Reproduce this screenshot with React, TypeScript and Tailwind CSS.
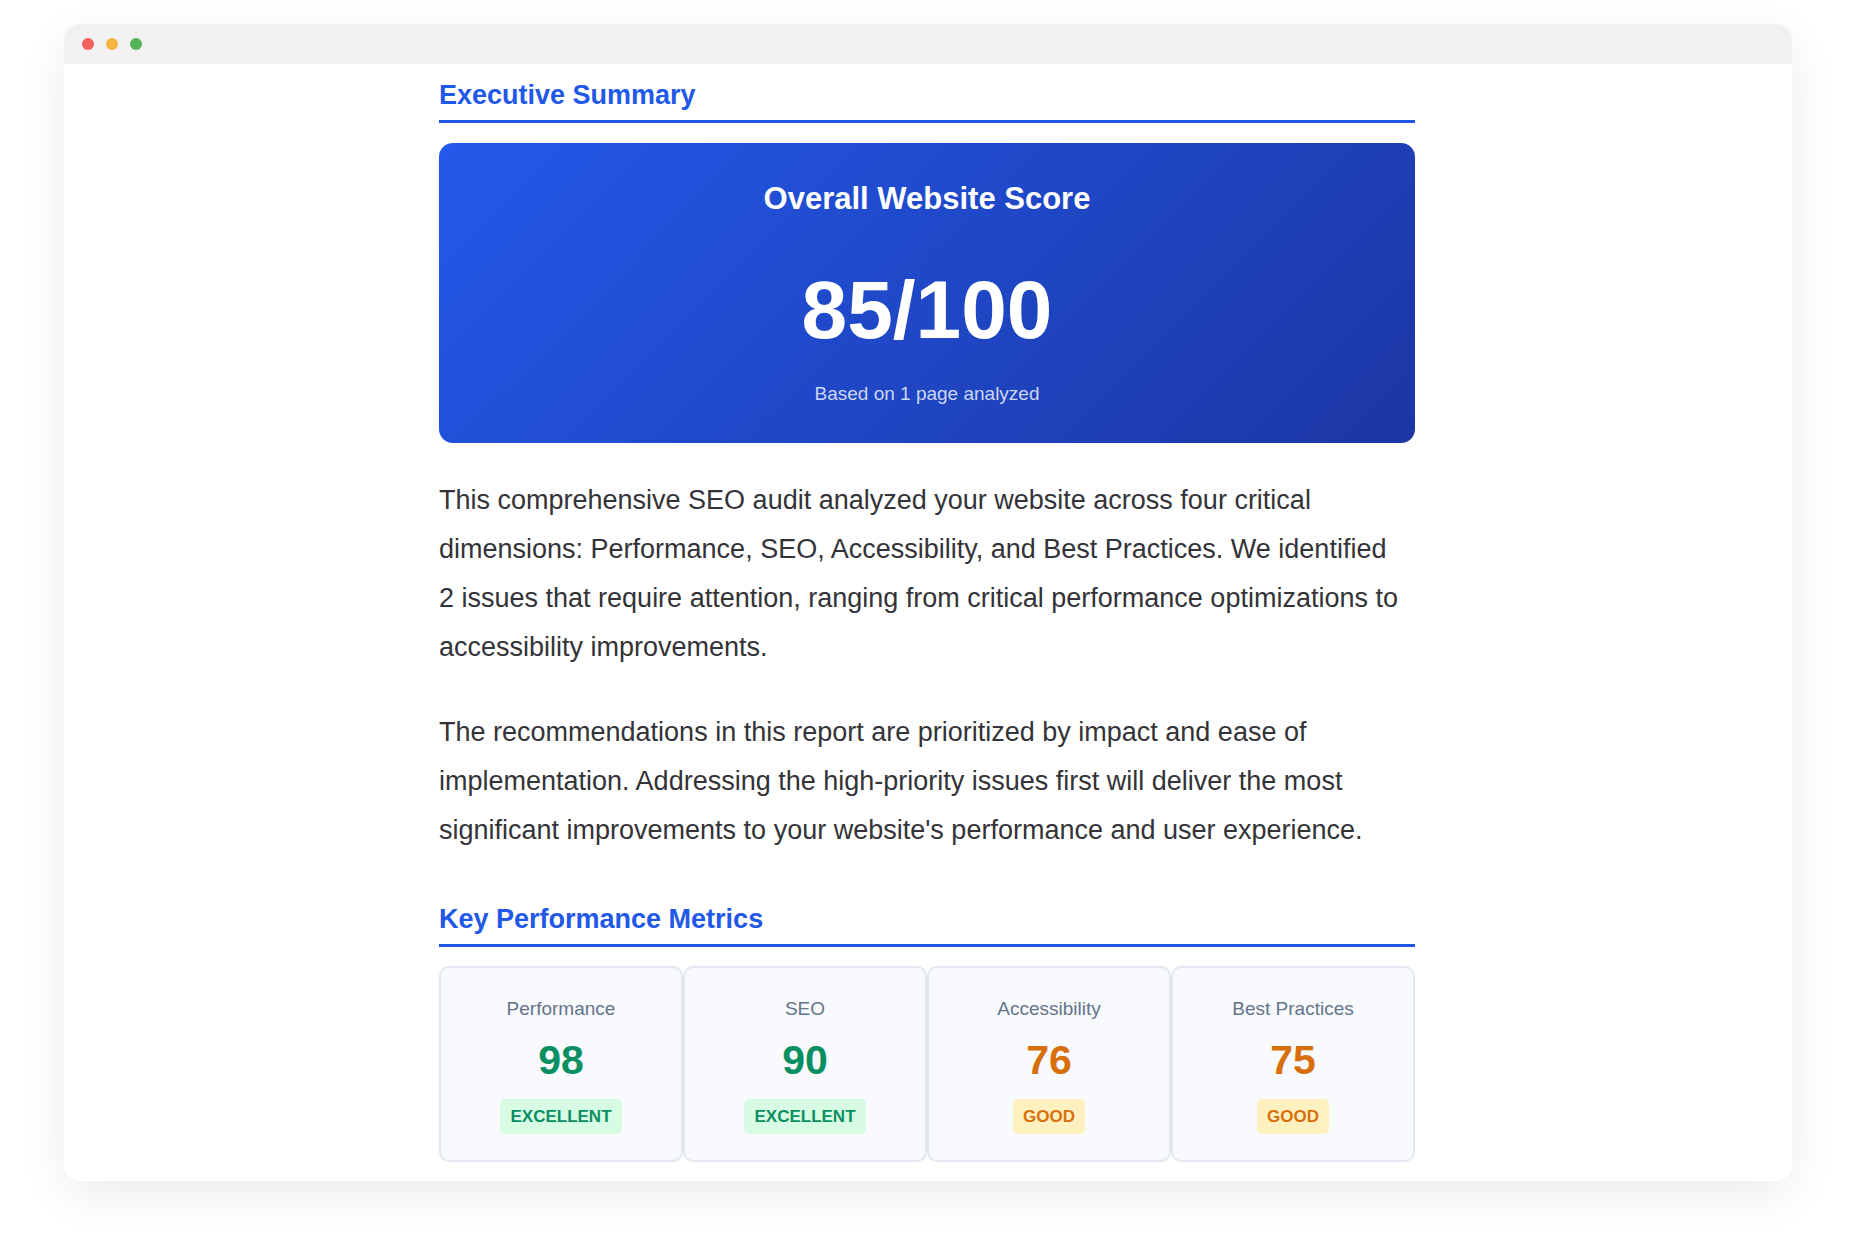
import React from "react";

type Rating = "EXCELLENT" | "GOOD";

interface Metric {
  label: string;
  score: number;
  rating: Rating;
}

const metrics: Metric[] = [
  { label: "Performance", score: 98, rating: "EXCELLENT" },
  { label: "SEO", score: 90, rating: "EXCELLENT" },
  { label: "Accessibility", score: 76, rating: "GOOD" },
  { label: "Best Practices", score: 75, rating: "GOOD" },
];

const scoreColor: Record<Rating, string> = {
  EXCELLENT: "text-[#0a8f62]",
  GOOD: "text-[#d7700c]",
};

const badgeColor: Record<Rating, string> = {
  EXCELLENT: "bg-[#d8fbe4] text-[#0a8f62]",
  GOOD: "bg-[#fef0bf] text-[#d7700c]",
};

function SectionHeading({ children }: { children: React.ReactNode }) {
  return (
    <h2 className="border-b-3 border-[#2258e8] pb-[7px] text-[27px] leading-9 font-bold text-[#2258e8]">
      {children}
    </h2>
  );
}

function TitleBar() {
  return (
    <header className="flex h-10 items-center gap-3 bg-[#f1f1f3] px-[18px]">
      <span className="size-3 rounded-full bg-[#f4605a]" />
      <span className="size-3 rounded-full bg-[#f5b63e]" />
      <span className="size-3 rounded-full bg-[#57b45a]" />
    </header>
  );
}

function OverallScore() {
  return (
    <div className="mt-5 rounded-[14px] bg-linear-[135deg,#2359ea,#1c36a4] pt-9 pb-[35px] text-center text-white">
      <h3 className="text-[31px] leading-10 font-bold">Overall Website Score</h3>
      <p className="mt-[43px] text-[82px] leading-24 font-bold">85/100</p>
      <p className="mt-[22px] text-[19px] leading-7 text-[#ccd6f3]">Based on 1 page analyzed</p>
    </div>
  );
}

function MetricCard({ label, score, rating }: Metric) {
  return (
    <li className="flex flex-col items-center rounded-[10px] border-2 border-[#e2e8f0] bg-[#f8fafd] pt-[27px] pb-[26px]">
      <span className="text-[19px] leading-7 text-[#64748b]">{label}</span>
      <span className={`mt-[13px] text-[41px] leading-12 font-bold ${scoreColor[rating]}`}>{score}</span>
      <span className={`mt-[15px] rounded-[5px] px-[10px] py-2 text-[17px] leading-[19px] font-bold ${badgeColor[rating]}`}>
        {rating}
      </span>
    </li>
  );
}

export default function App() {
  return (
    <div className="min-h-screen bg-white px-16 pt-6 pb-16 font-['Liberation_Sans',Arial,sans-serif]">
      <div className="overflow-hidden rounded-2xl bg-white shadow-[0_14px_50px_-4px_rgba(0,0,0,0.09)]">
        <TitleBar />
        <main className="mx-auto max-w-[978px] pt-[13px] pr-0.5 pb-[19px]">
          <section>
            <SectionHeading>Executive Summary</SectionHeading>
            <OverallScore />
            <div className="mt-[33px] flex flex-col gap-9 text-[27px] leading-[49px] text-[#333338]">
              <p>
                This comprehensive SEO audit analyzed your website across four critical dimensions: Performance, SEO,
                Accessibility, and Best Practices. We identified 2&nbsp;issues that require attention, ranging from
                critical performance optimizations to accessibility improvements.
              </p>
              <p>
                The recommendations in this report are prioritized by impact and ease of implementation. Addressing the
                high-priority issues first will deliver the most significant improvements to your website's performance
                and user experience.
              </p>
            </div>
          </section>
          <section className="mt-[46px]">
            <SectionHeading>Key Performance Metrics</SectionHeading>
            <ul className="mt-[19px] grid grid-cols-4">
              {metrics.map((metric) => (
                <MetricCard key={metric.label} {...metric} />
              ))}
            </ul>
          </section>
        </main>
      </div>
    </div>
  );
}
